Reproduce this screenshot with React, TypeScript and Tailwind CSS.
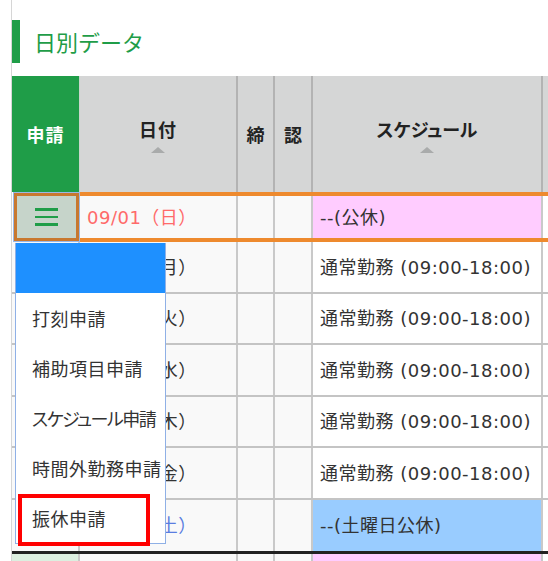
import React from 'react';

// 日別データの1行分
interface Row {
  date: string;
  schedule: string;
  h: string;
  dateColor: string;
  schedBg: string;
}

const rows: Row[] = [
  { date: '09/02（月）', schedule: '通常勤務 (09:00-18:00)', h: 'h-[52px]', dateColor: 'text-[#333]', schedBg: 'bg-white' },
  { date: '09/03（火）', schedule: '通常勤務 (09:00-18:00)', h: 'h-[51px]', dateColor: 'text-[#333]', schedBg: 'bg-white' },
  { date: '09/04（水）', schedule: '通常勤務 (09:00-18:00)', h: 'h-[52px]', dateColor: 'text-[#333]', schedBg: 'bg-white' },
  { date: '09/05（木）', schedule: '通常勤務 (09:00-18:00)', h: 'h-[51px]', dateColor: 'text-[#333]', schedBg: 'bg-white' },
  { date: '09/06（金）', schedule: '通常勤務 (09:00-18:00)', h: 'h-[52px]', dateColor: 'text-[#333]', schedBg: 'bg-white' },
  { date: '09/07（土）', schedule: '--(土曜日公休)', h: 'h-[54px]', dateColor: 'text-[#5a7de0]', schedBg: 'bg-[#99ccff]' },
];

const menuItems = [
  { label: '打刻申請', track: 'tracking-[0.5px]' },
  { label: '補助項目申請', track: 'tracking-[0.5px]' },
  { label: 'スケジュール申請', track: 'tracking-[-1.5px]' },
  { label: '時間外勤務申請', track: 'tracking-[0.5px]' },
  { label: '振休申請', track: 'tracking-[0.5px]' },
];

function SortMark() {
  return <span className="mt-[4px] block w-0 h-0 border-x-[7px] border-x-transparent border-b-[6px] border-b-[#a9abab]"></span>;
}

export default function App() {
  const font = { fontFamily: '"DejaVu Sans", "Noto Sans CJK JP", sans-serif' };
  const cjk = { fontFamily: '"Noto Sans CJK JP", sans-serif', fontFeatureSettings: '"palt"' };
  const cell = 'shrink-0 border-r-2 border-[#c9c9c9]';

  return (
    <div className="w-[548px] h-[561px] overflow-hidden bg-white" style={font}>
      <div className="ml-[11px] h-full border-l border-[#d6d6d6] relative">
        {/* タイトル */}
        <div className="h-[76px] pt-[20px] flex items-start">
          <div className="w-[8px] h-[43px] bg-[#1f9d48]"></div>
          <h2 className="ml-[14px] text-[22px] leading-[43px] text-[#1f9d48]" style={{ fontFamily: '"Noto Sans CJK JP", sans-serif' }}>
            日別データ
          </h2>
        </div>

        {/* ヘッダー */}
        <div className="flex h-[116px] text-[18px] font-bold text-[#222]" style={cjk}>
          <div className="w-[68px] shrink-0 bg-[#1f9d48] text-white flex items-center justify-center border-r border-[#c9d6cc] tracking-[1px]">申請</div>
          <div className="w-[158px] shrink-0 bg-[#d5d6d6] border-r-2 border-[#b3b3b3] flex flex-col items-center justify-center tracking-[1px]">
            日付
            <SortMark />
          </div>
          <div className="w-[37px] shrink-0 bg-[#d5d6d6] border-r-2 border-[#b3b3b3] flex items-center justify-center">締</div>
          <div className="w-[38px] shrink-0 bg-[#d5d6d6] border-r-2 border-[#b3b3b3] flex items-center justify-center">認</div>
          <div className="w-[230px] shrink-0 bg-[#d5d6d6] border-r-2 border-[#b3b3b3] flex flex-col items-center justify-center">
            スケジュール
            <SortMark />
          </div>
          <div className="w-[120px] shrink-0 bg-[#d5d6d6]"></div>
        </div>

        {/* 選択中の行 */}
        <div className="flex h-[50px] text-[18px] tracking-[0.5px]">
          <div className="w-[68px] shrink-0 pl-[1px]">
            <div className="h-full border border-[#9bb8e6]">
              <div className="h-full border-[3px] border-[#c8782f] bg-[#c6d4ca] flex flex-col items-center justify-center gap-[5px]">
                <span className="block w-[23px] h-[2.5px] bg-[#1f9d48]"></span>
                <span className="block w-[23px] h-[2.5px] bg-[#1f9d48]"></span>
                <span className="block w-[23px] h-[2.5px] bg-[#1f9d48]"></span>
              </div>
            </div>
          </div>
          <div className="flex flex-1 border-y-4 border-[#ee8a2e]">
            <div className={`w-[158px] ${cell} bg-[#f9f9f9] pl-[7px] flex items-center text-[#ff6a6a]`}>09/01（日）</div>
            <div className={`w-[37px] ${cell} bg-[#f9f9f9]`}></div>
            <div className={`w-[38px] ${cell} bg-[#f9f9f9]`}></div>
            <div className={`w-[230px] ${cell} bg-[#ffccff] pl-[7px] flex items-center text-[#333]`}>--(公休)</div>
            <div className="w-[120px] shrink-0 bg-white"></div>
          </div>
        </div>

        {rows.map((r, i) => (
          <div
            key={r.date}
            className={`flex ${r.h} text-[18px] tracking-[0.5px] ${i === rows.length - 1 ? 'border-b-[3px] border-[#222]' : 'border-b-2 border-[#c4c4c4]'}`}
          >
            <div className={`w-[68px] ${cell} bg-[#f9f9f9]`}></div>
            <div className={`w-[158px] ${cell} bg-[#f9f9f9] pl-[7px] flex items-center ${r.dateColor}`}>{r.date}</div>
            <div className={`w-[37px] ${cell} bg-[#f9f9f9]`}></div>
            <div className={`w-[38px] ${cell} bg-[#f9f9f9]`}></div>
            <div className={`w-[230px] ${cell} ${r.schedBg} pl-[7px] flex items-center text-[#333]`}>{r.schedule}</div>
            <div className="w-[120px] shrink-0 bg-white"></div>
          </div>
        ))}

        {/* 次の行（一部） */}
        <div className="flex h-[40px]">
          <div className={`w-[68px] ${cell} bg-[#dcefe0]`}></div>
          <div className={`w-[158px] ${cell} bg-[#f9f9f9]`}></div>
          <div className={`w-[37px] ${cell} bg-[#f9f9f9]`}></div>
          <div className={`w-[38px] ${cell} bg-[#f9f9f9]`}></div>
          <div className={`w-[230px] ${cell} bg-[#ffccff]`}></div>
          <div className="w-[120px] shrink-0 bg-white"></div>
        </div>

        {/* 申請メニュー */}
        <div className="absolute left-[3px] top-[243px] w-[151px] border border-t-0 border-[#8fb0e6] bg-white">
          <div className="h-[50px] bg-[#1e90ff]"></div>
          {menuItems.map((m) => (
            <div key={m.label} className={`h-[50px] pl-[16px] flex items-center whitespace-nowrap text-[18px] text-[#333] ${m.track}`} style={cjk}>
              {m.label}
            </div>
          ))}
          <div className="absolute left-[2px] top-[251px] w-[132px] h-[52px] border-4 border-[#ff0000]"></div>
        </div>
      </div>
    </div>
  );
}
